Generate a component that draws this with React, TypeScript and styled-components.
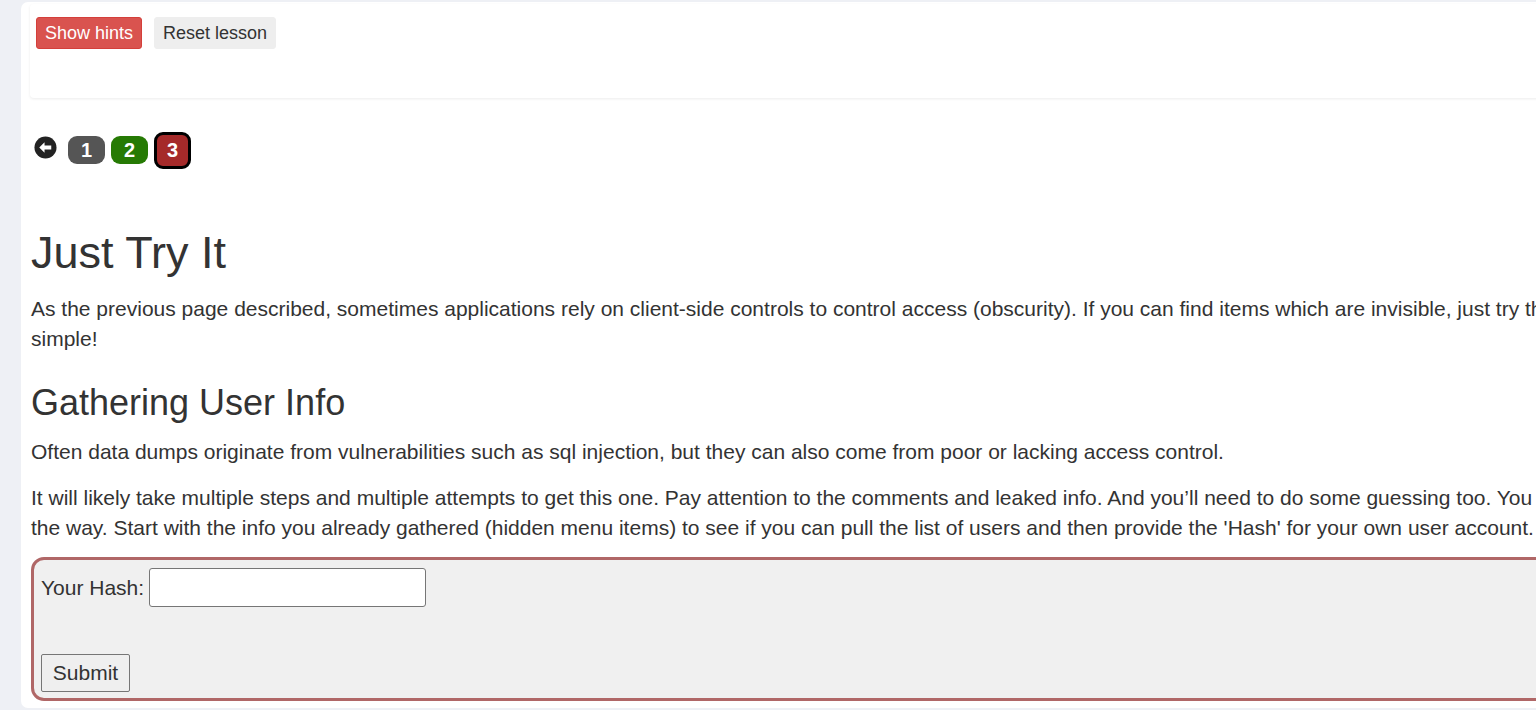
import React from "react";
import styled, { createGlobalStyle } from "styled-components";

const Global = createGlobalStyle`
  html, body { margin: 0; padding: 0; overflow: hidden; }
  body {
    background: #eef0f5;
    font-family: "Liberation Sans", Arial, sans-serif;
    color: #333;
    width: 1536px;
    height: 710px;
  }
`;

const Panel = styled.main`
  margin: 2px 0 0 21px;
  width: 2000px;
  height: 706px;
  background: #fff;
  border-radius: 7px;
  padding: 2px 0 0 9px;
  box-sizing: border-box;
`;

const Card = styled.div`
  background: #fff;
  border-radius: 4px;
  box-shadow: 0 1px 3px rgba(0, 0, 0, 0.08);
  height: 94px;
  padding: 13px 6px 0;
  box-sizing: border-box;
  display: flex;
  align-items: flex-start;
  gap: 12px;
`;

const Btn = styled.button<{ $variant: "danger" | "plain" }>`
  font-family: "Liberation Sans", Arial, sans-serif;
  font-size: 18px;
  height: 32px;
  padding: 0 8px;
  border-radius: 3px;
  cursor: pointer;
  border: 1px solid ${(p) => (p.$variant === "danger" ? "#d43f3a" : "#eee")};
  background: ${(p) => (p.$variant === "danger" ? "#d9534f" : "#eee")};
  color: ${(p) => (p.$variant === "danger" ? "#fff" : "#333")};
`;

const Nav = styled.nav`
  display: flex;
  align-items: center;
  gap: 6px;
  margin: 34px 0 0 4px;
  height: 36px;
`;

const Back = styled.span`
  display: inline-flex;
  width: 23px;
  height: 23px;
  margin-right: 5px;
  margin-top: -6px;
`;

const Badge = styled.span<{ $bg: string; $active?: boolean }>`
  display: inline-flex;
  align-items: center;
  justify-content: center;
  box-sizing: border-box;
  width: 37px;
  height: ${(p) => (p.$active ? "37px" : "28px")};
  border-radius: 9px;
  background: ${(p) => p.$bg};
  color: #fff;
  font-weight: bold;
  font-size: 20px;
  border: ${(p) => (p.$active ? "3px solid #000" : "none")};
`;

const Content = styled.section`
  padding: 0 0 0 1px;
`;

const H1 = styled.h1`
  font-size: 45px;
  font-weight: 500;
  margin: 60px 0 0;
  line-height: 50px;
`;

const H2 = styled.h2`
  font-size: 36px;
  font-weight: 500;
  margin: 27px 0 0;
  line-height: 44px;
`;

const P = styled.p`
  font-size: 21px;
  line-height: 30px;
  margin: 16px 0 16px;
  white-space: nowrap;
`;

const Lead = styled(P)`
  margin-top: 12px;
`;

const Form = styled.form`
  margin-top: -2px;
  border: 3px solid #b06767;
  border-radius: 13px;
  background: #f0f0f0;
  height: 144px;
  box-sizing: border-box;
  padding: 8px 7px 6px;
  display: flex;
  flex-direction: column;
  justify-content: space-between;
`;

const Row = styled.div`
  display: flex;
  align-items: center;
  gap: 5px;
  font-size: 21px;
`;

const Input = styled.input`
  width: 277px;
  height: 39px;
  box-sizing: border-box;
  border: 1px solid #767676;
  border-radius: 3px;
  background: #fff;
`;

const Submit = styled.button`
  align-self: flex-start;
  width: 89px;
  height: 38px;
  font-family: "Liberation Sans", Arial, sans-serif;
  font-size: 21px;
  color: #333;
  background: #efefef;
  border: 1px solid #767676;
  border-radius: 2px;
`;

export default function App() {
  return (
    <>
      <Global />
      <Panel>
        <Card>
          <Btn $variant="danger">Show hints</Btn>
          <Btn $variant="plain">Reset lesson</Btn>
        </Card>
        <Nav>
          <Back>
            <svg width="23" height="23" viewBox="0 0 24 24">
              <circle cx="12" cy="12" r="11.5" fill="#222" />
              <path d="M5.5 12 L11 6.5 L11 10 L18 10 L18 14 L11 14 L11 17.5 Z" fill="#fff" />
            </svg>
          </Back>
          <Badge $bg="#555">1</Badge>
          <Badge $bg="#267a04">2</Badge>
          <Badge $bg="#a52a2a" $active>3</Badge>
        </Nav>
        <Content>
          <H1>Just Try It</H1>
          <P>
            As the previous page described, sometimes applications rely on client-side controls to control access (obscurity). If you can find items which are invisible, just try them and see what happens. It really can be that
            <br />
            simple!
          </P>
          <H2>Gathering User Info</H2>
          <Lead>
            Often data dumps originate from vulnerabilities such as sql injection, but they can also come from poor or lacking access control.
          </Lead>
          <P>
            It will likely take multiple steps and multiple attempts to get this one. Pay attention to the comments and leaked info. And you’ll need to do some guessing too. You may need to use another tool along
            <br />
            the way. Start with the info you already gathered (hidden menu items) to see if you can pull the list of users and then provide the 'Hash' for your own user account.
          </P>
          <Form onSubmit={(e) => e.preventDefault()}>
            <Row>
              Your Hash: <Input type="text" />
            </Row>
            <Submit type="submit">Submit</Submit>
          </Form>
        </Content>
      </Panel>
    </>
  );
}
